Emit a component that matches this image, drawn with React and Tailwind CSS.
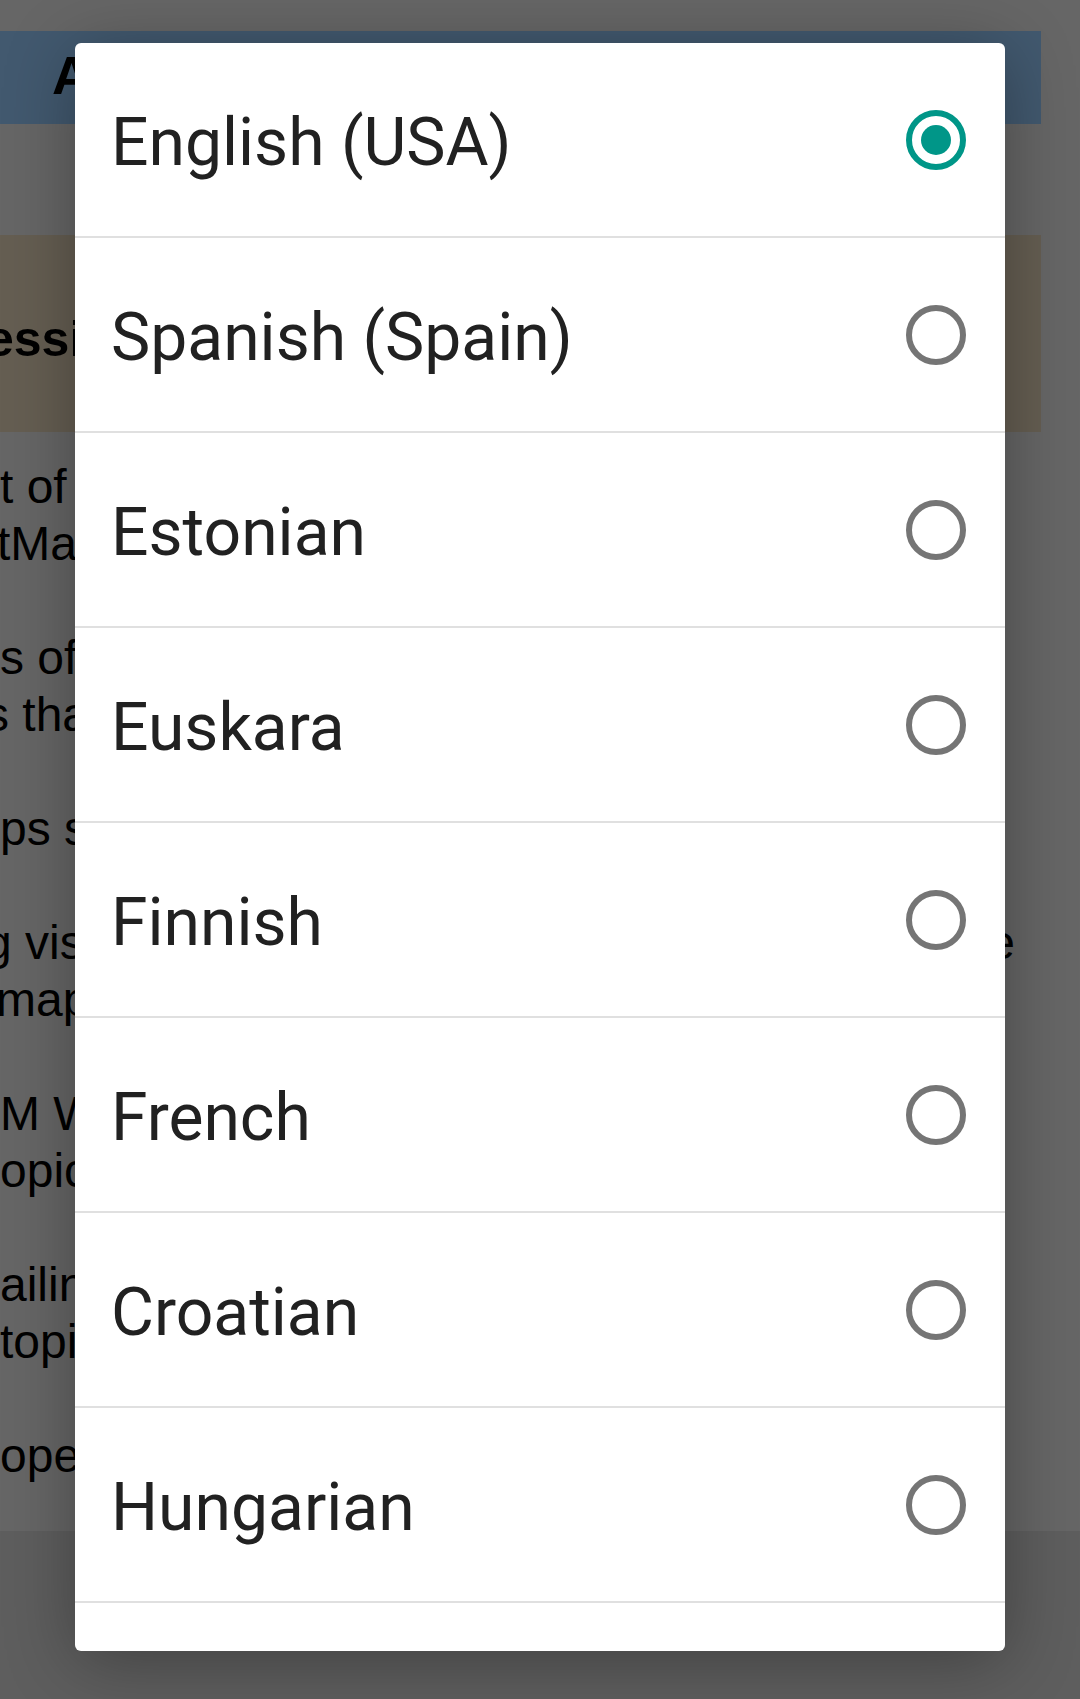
import { useState } from 'react';

const languages = [
  'English (USA)',
  'Spanish (Spain)',
  'Estonian',
  'Euskara',
  'Finnish',
  'French',
  'Croatian',
  'Hungarian',
  'Italian',
];

// page behind the dimmed overlay (colors are already the dimmed ones)
const paragraphs = [
  [
    { text: 't of the OpenStreetMap project and its', cls: '' },
    { text: 'tMap contributors around the world', cls: 'ml-[-3px]' },
  ],
  [
    { text: 's of the map data can be edited by', cls: '' },
    { text: 's that are signed in with an account', cls: 'ml-[-15px]' },
  ],
  [{ text: 'ps shown here are rendered offline', cls: '' }],
  [
    { text: 'g visual style of the maps depends on the theme', cls: 'ml-[-15px]' },
    { text: 'map style that has been selected', cls: 'ml-[-4px]' },
  ],
  [
    { text: 'M Wiki has more on this and other', cls: '' },
    { text: 'opics about editing the map data', cls: '' },
  ],
  [
    { text: 'ailing lists are the place for any', cls: '' },
    { text: 'topics that are not covered above', cls: '' },
  ],
  [{ text: 'open source and free software', cls: '' }],
];

function Radio({ checked }) {
  return (
    <svg width="60" height="60" viewBox="0 0 60 60" className="shrink-0">
      <circle
        cx="30"
        cy="30"
        r="27"
        fill="none"
        strokeWidth="6"
        stroke={checked ? '#009688' : '#757575'}
      />
      {checked && <circle cx="30" cy="30" r="15" fill="#009688" />}
    </svg>
  );
}

export default function App() {
  const [selected, setSelected] = useState(0);

  return (
    <div className="relative w-[1080px] h-[1699px] flex flex-col bg-[#5e5e5e] overflow-hidden font-['Liberation_Sans',Arial,sans-serif] text-black">
      {/* Background page */}
      <div className="h-[1531px] bg-[#666666] pt-[31px]">
        <div className="w-[1041px]">
          <div className="h-[93px] bg-[#42596f] flex items-center pl-[52px] pb-[6px]">
            <span className="text-[54px] font-bold leading-none">About</span>
          </div>
          <div className="h-[111px]" />
          <div className="h-[197px] bg-[#655e52] flex items-center pt-[10px] overflow-hidden">
            <span className="text-[50px] font-bold leading-none whitespace-nowrap ml-[-14px]">essions and more</span>
          </div>
          <div className="pt-[26px] flex flex-col gap-[57px] overflow-hidden">
            {paragraphs.map((lines, i) => (
              <div key={i} className="text-[48px] leading-[57px] whitespace-nowrap">
                {lines.map((line, j) => (
                  <div key={j} className={line.cls}>{line.text}</div>
                ))}
              </div>
            ))}
          </div>
        </div>
      </div>
      <div className="flex-1" />

      {/* Language picker dialog */}
      <div className="absolute left-[75px] top-[43px] w-[930px] h-[1608px] bg-white rounded-[6px] overflow-hidden shadow-[0_10px_70px_rgba(0,0,0,0.32)] font-['Roboto','Noto_Sans',sans-serif]">
        {languages.map((lang, i) => (
          <button
            key={lang}
            type="button"
            onClick={() => setSelected(i)}
            className="w-full h-[195px] shrink-0 flex items-center justify-between pl-[36px] pr-[39px] border-b-2 border-[#e0e0e0] text-left"
          >
            <span className="text-[66px] leading-none text-[#212121] pt-[6px]">{lang}</span>
            <Radio checked={selected === i} />
          </button>
        ))}
      </div>
    </div>
  );
}
